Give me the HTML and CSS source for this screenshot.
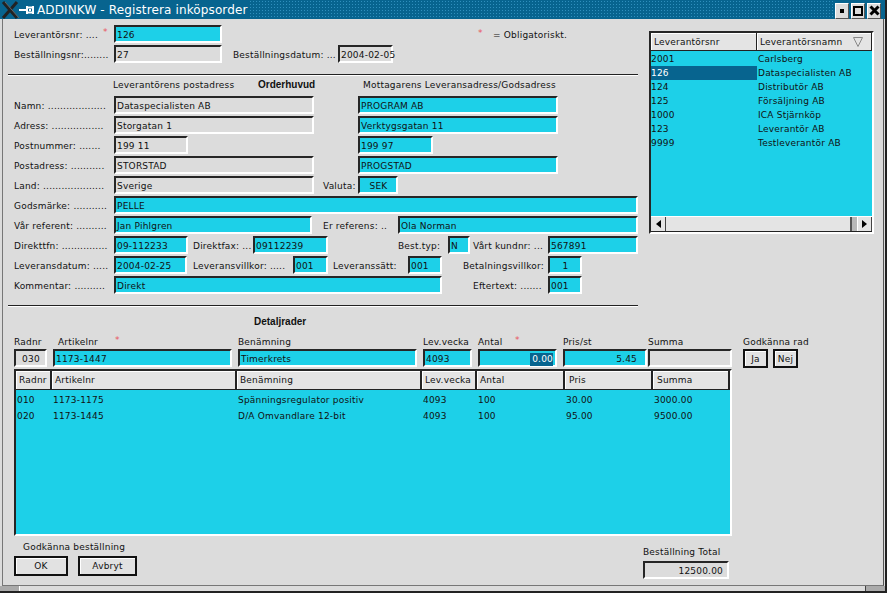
FILE: index.html
```html
<!doctype html>
<html>
<head>
    <title>ADDINKW - Registrera inköpsorder</title>
    <link rel="stylesheet" href="styles.css">
</head>

<body>
    <div class="titlebar">
        <svg class="xlogo" width="19" height="19" viewBox="0 0 19 19">
            <path d="M3 2 L17 18 M17 2 L3 18" stroke="#222" stroke-width="3" fill="none" />
            <path d="M5 2 L19 18" stroke="#666" stroke-width="1" fill="none" />
        </svg>
        <svg class="pin" width="18" height="19" viewBox="0 0 18 19">
            <path d="M0 10 H7" stroke="#fff" stroke-width="2" />
            <path d="M8 6 V14 M14 6 V14 M8 7.5 H14 M8 12.5 H14" stroke="#fff" stroke-width="2" />
            <path d="M10 9 H12 V11 H10 Z" fill="#fff" />
        </svg>
        <span class="wintitle">ADDINKW - Registrera inköpsorder</span>
        <span class="dots"></span>
        <span class="wbtn"><i class="ic-min"></i></span>
        <span class="wbtn"><i class="ic-max"></i></span>
        <span class="wbtn">
            <svg width="11" height="11" viewBox="0 0 11 11"><path d="M1.5 1.5 L9.5 9.5 M9.5 1.5 L1.5 9.5" stroke="#000" stroke-width="3" /></svg>
        </span>
    </div>

    <div class="client">
        <div class="form">
            <div class="top-rows">
                <div class="row">
                    <span class="lbl w89">Leverantörsnr: ....</span><span class="star w11">*</span>
                    <span class="fld cy w108">126</span>
                    <span class="star oblig">*</span><span class="lbl">= Obligatoriskt.</span>
                </div>
                <div class="row">
                    <span class="lbl w100">Beställningsnr:........</span>
                    <span class="fld w108">27</span>
                    <span class="lbl w105 ml11">Beställningsdatum: ...</span>
                    <span class="fld w55">2004-02-05</span>
                </div>
            </div>
            <div class="rule rule1"></div>

            <div class="heads">
                <span class="lbl w145">Leverantörens postadress</span>
                <span class="bold w105">Orderhuvud</span>
                <span class="lbl">Mottagarens Leveransadress/Godsadress</span>
            </div>

            <div class="rows">
                <div class="row">
                    <span class="lbl w100">Namn: ...................</span>
                    <span class="fld w200">Dataspecialisten AB</span>
                    <span class="fld cy w200 ml44">PROGRAM AB</span>
                </div>
                <div class="row">
                    <span class="lbl w100">Adress: .................</span>
                    <span class="fld w200">Storgatan 1</span>
                    <span class="fld cy w200 ml44">Verktygsgatan 11</span>
                </div>
                <div class="row">
                    <span class="lbl w100">Postnummer: .......</span>
                    <span class="fld w74">199 11</span>
                    <span class="fld cy w75 ml170">199 97</span>
                </div>
                <div class="row">
                    <span class="lbl w100">Postadress: ...........</span>
                    <span class="fld w200">STORSTAD</span>
                    <span class="fld cy w200 ml44">PROGSTAD</span>
                </div>
                <div class="row">
                    <span class="lbl w100">Land: ....................</span>
                    <span class="fld w200">Sverige</span>
                    <span class="lbl w35 ml9">Valuta:</span>
                    <span class="fld cy w40 center">SEK</span>
                </div>
                <div class="row">
                    <span class="lbl w100">Godsmärke: ...........</span>
                    <span class="fld cy w524">PELLE</span>
                </div>
                <div class="row">
                    <span class="lbl w100">Vår referent: ..........</span>
                    <span class="fld cy w198">Jan Pihlgren</span>
                    <span class="lbl w75 ml11">Er referens: ..</span>
                    <span class="fld cy w240">Ola Norman</span>
                </div>
                <div class="row">
                    <span class="lbl w100">Direkttfn: ...............</span>
                    <span class="fld cy w74">09-112233</span>
                    <span class="lbl w60 ml5">Direktfax: ...</span>
                    <span class="fld cy w75">09112239</span>
                    <span class="lbl w50 ml70">Best.typ:</span>
                    <span class="fld cy w22">N</span>
                    <span class="lbl w75 ml3">Vårt kundnr: ...</span>
                    <span class="fld cy w90">567891</span>
                </div>
                <div class="row">
                    <span class="lbl w100">Leveransdatum: .....</span>
                    <span class="fld cy w73">2004-02-25</span>
                    <span class="lbl w100 ml6">Leveransvillkor: .....</span>
                    <span class="fld cy w35">001</span>
                    <span class="lbl w75 ml5">Leveranssätt:</span>
                    <span class="fld cy w34">001</span>
                    <span class="lbl w85 ml21">Betalningsvillkor:</span>
                    <span class="fld cy w34 center">1</span>
                </div>
                <div class="row">
                    <span class="lbl w100">Kommentar: ..........</span>
                    <span class="fld cy w328">Direkt</span>
                    <span class="lbl w75 ml31">Eftertext: .......</span>
                    <span class="fld cy w34">001</span>
                </div>
            </div>
            <div class="rule rule2"></div>

            <div class="bold detail-title">Detaljrader</div>

            <div class="dlabels">
                <span class="lbl w44">Radnr</span>
                <span class="lbl w57">Artikelnr</span><span class="star w123">*</span>
                <span class="lbl w185">Benämning</span>
                <span class="lbl w55">Lev.vecka</span>
                <span class="lbl w37">Antal</span><span class="star w48">*</span>
                <span class="lbl w85">Pris/st</span>
                <span class="lbl w95">Summa</span>
                <span class="lbl">Godkänna rad</span>
            </div>
            <div class="drow">
                <span class="fld w33 center">030</span>
                <span class="fld cy w179 ml6">1173-1447</span>
                <span class="fld cy w179 ml6">Timerkrets</span>
                <span class="fld cy w49 ml6">4093</span>
                <span class="fld cy w79 ml6 right"><b class="sel">0.00</b></span>
                <span class="fld cy w84 ml6 right pr8">5.45</span>
                <span class="fld w84 ml1"></span>
                <button class="btn small ml11">Ja</button>
                <button class="btn small ml5">Nej</button>
            </div>

            <div class="dtable">
                <div class="dhead">
                    <span>Radnr</span><span>Artikelnr</span><span>Benämning</span><span>Lev.vecka</span><span>Antal</span><span>Pris</span><span>Summa</span>
                </div>
                <div class="drec">
                    <span>010</span><span>1173-1175</span><span>Spänningsregulator positiv</span><span>4093</span><span>100</span><span>30.00</span><span>3000.00</span>
                </div>
                <div class="drec">
                    <span>020</span><span>1173-1445</span><span>D/A Omvandlare 12-bit</span><span>4093</span><span>100</span><span>95.00</span><span>9500.00</span>
                </div>
            </div>

            <div class="footer">
                <div>
                    <div class="lbl foot-lbl">Godkänna beställning</div>
                    <button class="btn ok">OK</button>
                    <button class="btn cancel">Avbryt</button>
                </div>
                <div class="total">
                    <div class="lbl">Beställning Total</div>
                    <span class="fld w86 right pr6">12500.00</span>
                </div>
            </div>
        </div>

        <div class="listbox">
            <div class="lhead">
                <span>Leverantörsnr</span>
                <span>Leverantörsnamn
                    <svg class="sort" width="10" height="10" viewBox="0 0 10 10"><path d="M0.5 0.5 H9.5 L5 9.5 Z" fill="none" stroke="#888" /></svg>
                </span>
            </div>
            <div class="lbody">
                <div class="lrec"><span>2001</span><span>Carlsberg</span></div>
                <div class="lrec on"><span>126</span><span>Dataspecialisten AB</span></div>
                <div class="lrec"><span>124</span><span>Distributör AB</span></div>
                <div class="lrec"><span>125</span><span>Försäljning AB</span></div>
                <div class="lrec"><span>1000</span><span>ICA Stjärnköp</span></div>
                <div class="lrec"><span>123</span><span>Leverantör AB</span></div>
                <div class="lrec"><span>9999</span><span>Testleverantör AB</span></div>
            </div>
            <div class="hscroll">
                <span class="arrow"><i class="tri-l"></i></span>
                <span class="thumb"></span>
                <span class="dither"></span>
                <span class="arrow"><i class="tri-r"></i></span>
            </div>
        </div>
    </div>
    <div class="bottom-frame"><span class="corner-l"></span><span class="mid"></span><span class="corner-r"></span></div>
</body>
</html>
```

FILE: styles.css
```css
* {
    box-sizing: border-box;
}
html, body {
    margin: 0;
    padding: 0;
}
body {
    width: 887px;
    height: 593px;
    overflow: hidden;
    background: #dcdcdc;
    border-right: 2px solid #222;
    font-family: "DejaVu Sans", sans-serif;
    font-size: 9px;
    letter-spacing: 0.2px;
    color: #111;
}

/* window title */
.titlebar {
    display: flex;
    align-items: center;
    height: 19px;
    background-color: #07648f;
    color: #fff;
}
.wintitle {
    font-size: 12px;
    letter-spacing: 0.13px;
    width: 212px;
    white-space: nowrap;
}
.dots {
    flex: 1;
    height: 19px;
    background-image: radial-gradient(#2f8fbd 0.8px, transparent 1px);
    background-size: 3px 3px;
}
.wbtn {
    display: flex;
    align-items: center;
    justify-content: center;
    width: 14px;
    height: 16px;
    margin-top: 2px;
    margin-right: 2px;
    background: #dcdcdc;
    border-top: 1px solid #fff;
    border-left: 1px solid #fff;
    border-right: 1px solid #555;
    border-bottom: 1px solid #555;
}
.wbtn:last-child {
    margin-right: 4px;
}
.ic-min {
    width: 4px;
    height: 4px;
    background: #000;
}
.ic-max {
    width: 10px;
    height: 10px;
    border: 2px solid #000;
}

/* client area */
.client {
    display: flex;
    height: 567px;
    margin-left: 2px;
    margin-right: 1px;
    padding-left: 11px;
    border-left: 1px solid #777;
    border-right: 1px solid #555;
    border-bottom: 1px solid #777;
}
.form {
    flex: none;
    width: 634px;
}
.top-rows {
    padding-top: 6px;
}
.row, .drow, .dlabels {
    display: flex;
    align-items: flex-start;
    height: 20px;
}
.row > *, .drow > *, .dlabels > * {
    flex: none;
}
.lbl {
    white-space: nowrap;
    line-height: 21px;
}
.bold {
    font-family: "Liberation Sans", sans-serif;
    font-size: 10px;
    letter-spacing: 0;
    font-weight: bold;
    white-space: nowrap;
    line-height: 18px;
}
.star {
    color: #e8555f;
    line-height: 14px;
    font-size: 9px;
}
.oblig {
    margin-left: 256px;
    width: 15px;
    line-height: 16px;
}

.fld {
    display: block;
    height: 18px;
    padding: 0 0 0 1px;
    background: #dcdcdc;
    border-top: 2px solid #262626;
    border-left: 2px solid #262626;
    border-right: 2px solid #fff;
    border-bottom: 2px solid #fff;
    line-height: 16px;
    white-space: nowrap;
}
.cy {
    background: #1dd0e8;
}
.center {
    text-align: center;
}
.right {
    text-align: right;
}
.pr8 {
    padding-right: 8px;
}
.pr6 {
    padding-right: 4px;
}
.sel {
    display: inline-block;
    font-weight: normal;
    color: #fff;
    background: #07648f;
    line-height: 13px;
    padding-left: 2px;
    margin-right: 2px;
}

.rule {
    margin-left: -6px;
    width: 630px;
    height: 2px;
    background: #222;
    border-bottom: 1px solid #fff;
}
.rule1 {
    margin-top: 9px;
}
.rule2 {
    margin-top: 9px;
}
.heads {
    display: flex;
    height: 20px;
    padding-left: 99px;
}
.heads .lbl {
    line-height: 18px;
}
.detail-title {
    margin-left: 240px;
    margin-top: 6px;
}
.dlabels {
    margin-top: 2px;
    height: 16px;
}
.dlabels .lbl {
    line-height: 18px;
}

/* widths */
.w11 { width: 11px; }
.w22 { width: 22px; }
.w33 { width: 33px; }
.w34 { width: 34px; }
.w35 { width: 35px; }
.w37 { width: 37px; }
.w40 { width: 40px; }
.w44 { width: 44px; }
.w48 { width: 48px; }
.w49 { width: 49px; }
.w50 { width: 50px; }
.w55 { width: 55px; }
.w57 { width: 57px; }
.w60 { width: 60px; }
.w73 { width: 73px; }
.w74 { width: 74px; }
.w75 { width: 75px; }
.w79 { width: 79px; }
.w84 { width: 84px; }
.w85 { width: 85px; }
.w86 { width: 86px; }
.w89 { width: 89px; }
.w90 { width: 90px; }
.w95 { width: 95px; }
.w100 { width: 100px; }
.w105 { width: 105px; }
.w108 { width: 108px; }
.w123 { width: 123px; }
.w145 { width: 145px; }
.w179 { width: 179px; }
.w185 { width: 185px; }
.w198 { width: 198px; }
.w200 { width: 200px; }
.w240 { width: 240px; }
.w328 { width: 328px; }
.w524 { width: 524px; }

.ml1 { margin-left: 1px; }
.ml3 { margin-left: 3px; }
.ml5 { margin-left: 5px; }
.ml6 { margin-left: 6px; }
.ml9 { margin-left: 9px; }
.ml11 { margin-left: 11px; }
.ml21 { margin-left: 21px; }
.ml31 { margin-left: 31px; }
.ml44 { margin-left: 44px; }
.ml70 { margin-left: 70px; }
.ml170 { margin-left: 170px; }

/* buttons */
.btn {
    font-family: inherit;
    font-size: 9px;
    letter-spacing: 0.2px;
    color: #111;
    padding: 0;
    background: #e2e2e2;
    border: 2px solid #111;
    box-shadow: inset 1px 1px 0 #fff;
}
.small {
    width: 25px;
    height: 19px;
}
.ok {
    width: 54px;
    height: 20px;
}
.cancel {
    width: 59px;
    height: 20px;
    margin-left: 7px;
}

/* lines table */
.dtable {
    width: 718px;
    height: 167px;
    background: #1dd0e8;
    border-top: 2px solid #262626;
    border-left: 2px solid #262626;
    border-right: 2px solid #fff;
    border-bottom: 2px solid #fff;
}
.dhead, .drec {
    display: grid;
    grid-template-columns: 36px 185px 185px 55px 88px 88px 1fr;
}
.dhead {
    height: 19px;
    border-bottom: 1px solid #222;
}
.dhead span {
    background: #e4e4e4;
    border-right: 2px solid #222;
    padding-left: 3px;
    line-height: 18px;
    white-space: nowrap;
    box-shadow: inset 1px 1px 0 #fff;
}
.dhead span:nth-child(n+6) {
    padding-left: 4px;
}
.drec {
    height: 16px;
    line-height: 16px;
    white-space: nowrap;
}
.dhead + .drec {
    margin-top: 2px;
}
.drec span {
    padding-left: 1px;
}

.footer {
    display: flex;
    justify-content: space-between;
    width: 716px;
    padding-top: 2px;
}
.foot-lbl {
    margin-left: 9px;
    line-height: 18px;
}
.total {
    padding-top: 5px;
    padding-right: 1px;
}
.total .lbl {
    line-height: 18px;
}

/* supplier list */
.listbox {
    flex: none;
    margin-left: 1px;
    margin-top: 12px;
    width: 225px;
    height: 203px;
    background: #1dd0e8;
    border-top: 2px solid #262626;
    border-left: 2px solid #262626;
    border-right: 2px solid #fff;
    border-bottom: 2px solid #fff;
    display: flex;
    flex-direction: column;
}
.lhead {
    display: grid;
    grid-template-columns: 106px 1fr;
    height: 18px;
    border-bottom: 1px solid #222;
}
.lhead span {
    display: flex;
    align-items: center;
    justify-content: space-between;
    padding: 0 8px 0 3px;
    background: #e4e4e4;
    border-right: 1px solid #222;
    box-shadow: inset 1px 1px 0 #fff;
}
.lbody {
    flex: 1;
    padding-top: 1px;
}
.lrec {
    display: grid;
    grid-template-columns: 106px 1fr;
    height: 14px;
    line-height: 14px;
}
.lrec span + span {
    padding-left: 1px;
}
.lrec.on span:first-child {
    background: #07648f;
    color: #fff;
}
.hscroll {
    display: flex;
    height: 16px;
    background: #e4e4e4;
    border-top: 1px solid #fff;
    border-bottom: 1px solid #222;
}
.arrow {
    display: flex;
    align-items: center;
    justify-content: center;
    width: 15px;
    background: #e4e4e4;
    border-right: 1px solid #444;
}
.arrow:last-child {
    border-left: 1px solid #fff;
}
.thumb {
    flex: 1;
    border-right: 2px solid #555;
}
.dither {
    width: 5px;
    background-image: radial-gradient(#999 0.5px, transparent 1px);
    background-size: 2px 2px;
}
.tri-l, .tri-r {
    width: 0;
    height: 0;
    border-top: 4px solid transparent;
    border-bottom: 4px solid transparent;
}
.tri-l {
    border-right: 5px solid #000;
}
.tri-r {
    border-left: 5px solid #000;
}

/* bottom of the window frame */
.bottom-frame {
    display: flex;
    height: 7px;
    background: #dcdcdc;
    border-bottom: 2px solid #222;
}
.corner-l {
    width: 20px;
    background: #aaa;
    border-right: 1px solid #fff;
}
.mid {
    flex: 1;
}
.corner-r {
    width: 20px;
    background: #aaa;
    border-left: 1px solid #444;
}
```
